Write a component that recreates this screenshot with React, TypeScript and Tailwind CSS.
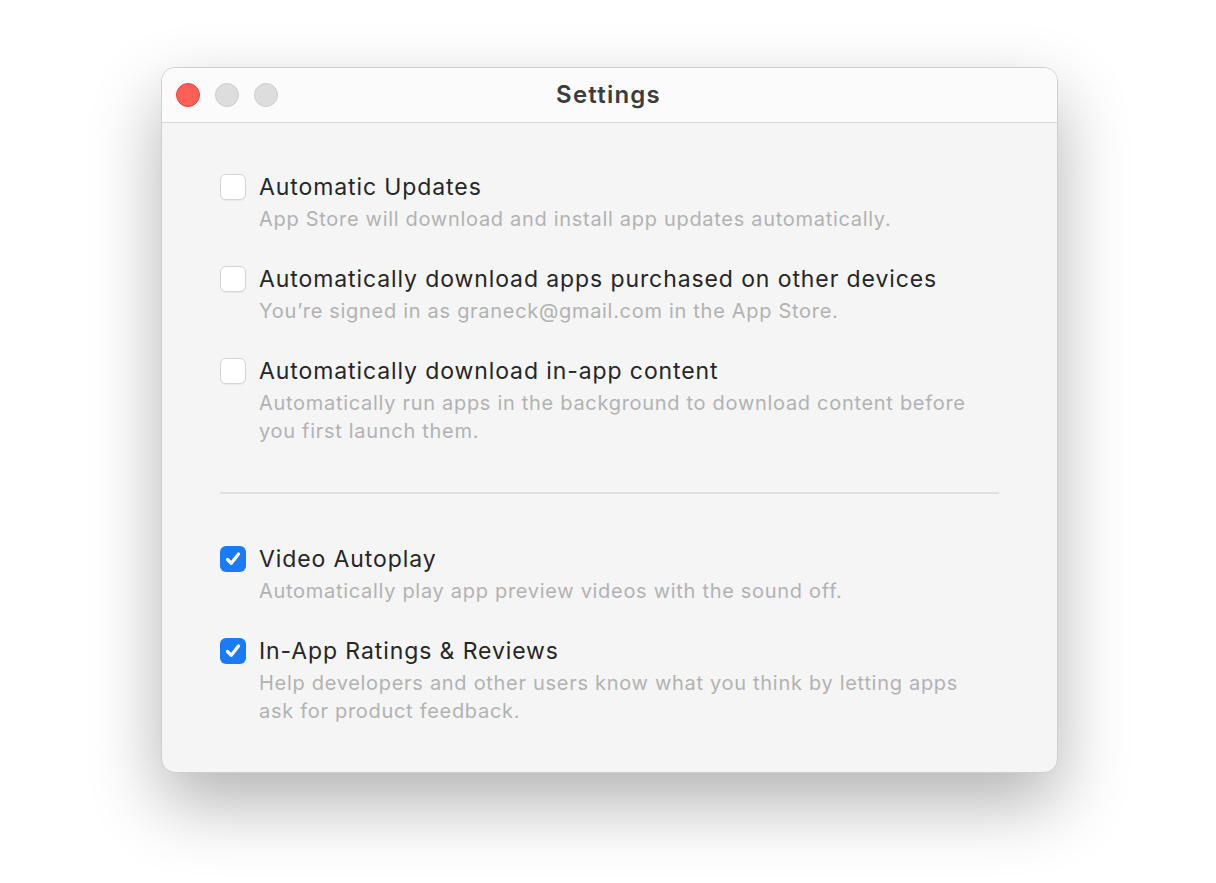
import React from "react";

type Option = {
  title: string;
  description: string;
  checked: boolean;
};

const group1: Option[] = [
  {
    title: "Automatic Updates",
    description: "App Store will download and install app updates automatically.",
    checked: false,
  },
  {
    title: "Automatically download apps purchased on other devices",
    description: "You\u2019re signed in as graneck@gmail.com in the App Store.",
    checked: false,
  },
  {
    title: "Automatically download in-app content",
    description:
      "Automatically run apps in the background to download content before you first launch them.",
    checked: false,
  },
];

const group2: Option[] = [
  {
    title: "Video Autoplay",
    description: "Automatically play app preview videos with the sound off.",
    checked: true,
  },
  {
    title: "In-App Ratings & Reviews",
    description:
      "Help developers and other users know what you think by letting apps ask for product feedback.",
    checked: true,
  },
];

function Checkbox({ checked }: { checked: boolean }) {
  if (checked) {
    return (
      <div className="w-[26px] h-[26px] rounded-[6px] bg-[#1b7bf6] flex items-center justify-center shrink-0">
        <svg width="20" height="20" viewBox="0 0 20 20" fill="none">
          <path
            d="M4.5 10.5 L8.3 14.3 L15.5 5"
            stroke="white"
            strokeWidth="3.2"
            strokeLinecap="round"
            strokeLinejoin="round"
          />
        </svg>
      </div>
    );
  }
  return (
    <div className="w-[26px] h-[26px] rounded-[6px] bg-white border border-[#d4d4d4] shadow-[0_1px_1px_rgba(0,0,0,0.05)] shrink-0" />
  );
}

function OptionRow({ option }: { option: Option }) {
  return (
    <div className="flex gap-[13px]">
      <div className="pt-[2px]">
        <Checkbox checked={option.checked} />
      </div>
      <div className="flex flex-col">
        <div className="text-[23px] leading-[30px] tracking-[0.9px] text-[#262626]">
          {option.title}
        </div>
        <div className="text-[20px] leading-[28px] tracking-[0.7px] text-[#b2b2b2] mt-[3px] max-w-[720px]">
          {option.description}
        </div>
      </div>
    </div>
  );
}

export default function App() {
  return (
    <div
      className="w-[1216px] h-[883px] bg-white pt-[67px] pl-[161px]"
      style={{ fontFamily: "Inter, 'Noto Sans', sans-serif" }}
    >
      <div className="w-[897px] h-[706px] rounded-[14px] bg-[#f5f5f5] border border-[#cfcfcf] shadow-[0_30px_70px_rgba(0,0,0,0.3)] overflow-hidden flex flex-col">
        <div className="h-[55px] bg-[#fbfbfb] border-b border-[#dadada] relative flex items-center justify-center">
          <div className="absolute left-[14px] top-[15px] flex gap-[15px]">
            <div className="w-[24px] h-[24px] rounded-full bg-[#fe5f57] border border-[#e0443e]" />
            <div className="w-[24px] h-[24px] rounded-full bg-[#dddddd] border border-[#cdcdcd]" />
            <div className="w-[24px] h-[24px] rounded-full bg-[#dddddd] border border-[#cdcdcd]" />
          </div>
          <div className="text-[24px] font-semibold tracking-[1.2px] text-[#3c3c3c] pr-[2px]">Settings</div>
        </div>
        <div className="pl-[58px] pr-[58px] pt-[49px] flex flex-col">
          <div className="flex flex-col gap-[31px]">
            {group1.map((o) => (
              <OptionRow key={o.title} option={o} />
            ))}
          </div>
          <div className="h-[2px] bg-[#e0e0e0] mt-[47px] mb-[50px]" />
          <div className="flex flex-col gap-[31px]">
            {group2.map((o) => (
              <OptionRow key={o.title} option={o} />
            ))}
          </div>
        </div>
      </div>
    </div>
  );
}
